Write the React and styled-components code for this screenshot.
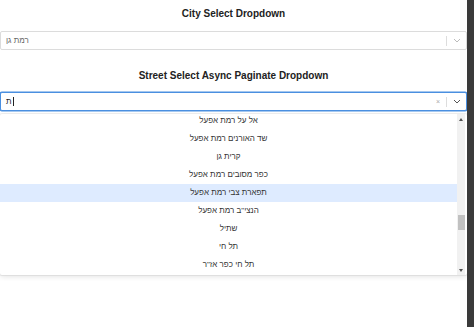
import React from "react";
import styled, { createGlobalStyle } from "styled-components";

const Global = createGlobalStyle`
  html, body { margin: 0; padding: 0; background: #fff; }
  body { font-family: "Liberation Sans", Arial, "DejaVu Sans", sans-serif; }
`;

const Page = styled.div`
  display: flex;
  width: 474px;
  height: 327px;
  overflow: hidden;
`;

const Content = styled.div`
  flex: 1;
  display: flex;
  flex-direction: column;
  background: #fff;
`;

const Edge = styled.div`
  width: 7px;
  background: #3a3a3a;
`;

const Title = styled.h3`
  margin: ${(p) => p.$top}px 0 ${(p) => p.$bottom}px;
  font-size: 10px;
  line-height: 12px;
  font-weight: bold;
  color: #222;
  text-align: center;
`;

const Control = styled.div`
  display: flex;
  align-items: center;
  height: 19px;
  box-sizing: border-box;
  border: 1px solid ${(p) => (p.$focused ? "#4a8fe0" : "#dcdcdc")};
  border-radius: 2px;
  box-shadow: ${(p) => (p.$focused ? "0 0 0 0.5px #4a8fe0" : "none")};
  background: #fff;
`;

const Value = styled.div`
  flex: 1;
  padding-left: 5px;
  font-size: 8px;
  color: ${(p) => (p.$input ? "#222" : "#666")};
  display: flex;
  align-items: center;
`;

const Caret = styled.span`
  display: inline-block;
  width: 1px;
  height: 9px;
  background: #222;
  margin-left: 1px;
`;

const Indicators = styled.div`
  display: flex;
  align-items: center;
  height: 100%;
`;

const Clear = styled.span`
  font-size: 7px;
  color: #aaa;
  padding: 0 6px;
`;

const Separator = styled.span`
  width: 1px;
  height: 10px;
  background: #ddd;
`;

const Chevron = styled.span`
  display: flex;
  align-items: center;
  justify-content: center;
  width: 19px;
  color: ${(p) => (p.$dark ? "#555" : "#bbb")};
`;

const Menu = styled.div`
  margin-top: 3px;
  height: 161px;
  display: flex;
  background: #fff;
  border-radius: 2px;
  box-shadow: 0 0 0 1px rgba(0, 0, 0, 0.06), 0 2px 5px rgba(0, 0, 0, 0.1);
  overflow: hidden;
`;

const List = styled.div`
  flex: 1;
  overflow: hidden;
`;

const Inner = styled.div`
  margin-top: -2px;
`;

const Option = styled.div`
  height: 18px;
  line-height: 18px;
  text-align: center;
  font-size: 8px;
  color: #333;
  background: ${(p) => (p.$active ? "#deebff" : "transparent")};
`;

const Track = styled.div`
  width: 8px;
  margin-right: 2px;
  background: #f1f1f1;
  display: flex;
  flex-direction: column;
  align-items: center;
`;

const Arrow = styled.div`
  width: 0;
  height: 0;
  border-left: 2.5px solid transparent;
  border-right: 2.5px solid transparent;
  ${(p) =>
    p.$down
      ? "border-top: 3px solid #505050; margin-top: auto; margin-bottom: 3px;"
      : "border-bottom: 3px solid #505050; margin-top: 4px;"}
`;

const Thumb = styled.div`
  width: 7px;
  height: 15px;
  margin-top: 94px;
  background: #c1c1c1;
`;

const ChevronIcon = () => (
  <svg width="8" height="5" viewBox="0 0 8 5">
    <path d="M1 1 L4 4 L7 1" fill="none" stroke="currentColor" strokeWidth="1" />
  </svg>
);

const options = [
  "אל על רמת אפעל",
  "שד האורנים רמת אפעל",
  "קרית גן",
  "כפר מסובים רמת אפעל",
  "תפארת צבי רמת אפעל",
  "הנצי\"ב רמת אפעל",
  "שתיל",
  "תל חי",
  "תל חי כפר אז\"ר",
];

export default function App() {
  return (
    <>
      <Global />
      <Page>
        <Content>
          <Title $top={8} $bottom={11}>City Select Dropdown</Title>
          <Control>
            <Value>רמת גן</Value>
            <Indicators>
              <Separator />
              <Chevron><ChevronIcon /></Chevron>
            </Indicators>
          </Control>
          <Title $top={20} $bottom={10}>Street Select Async Paginate Dropdown</Title>
          <Control $focused>
            <Value $input>
              ת<Caret />
            </Value>
            <Indicators>
              <Clear>×</Clear>
              <Separator />
              <Chevron $dark><ChevronIcon /></Chevron>
            </Indicators>
          </Control>
          <Menu>
            <List>
              <Inner>
                {options.map((o, i) => (
                  <Option key={o} $active={i === 4} dir="rtl">
                    {o}
                  </Option>
                ))}
              </Inner>
            </List>
            <Track>
              <Arrow />
              <Thumb />
              <Arrow $down />
            </Track>
          </Menu>
        </Content>
        <Edge />
      </Page>
    </>
  );
}
